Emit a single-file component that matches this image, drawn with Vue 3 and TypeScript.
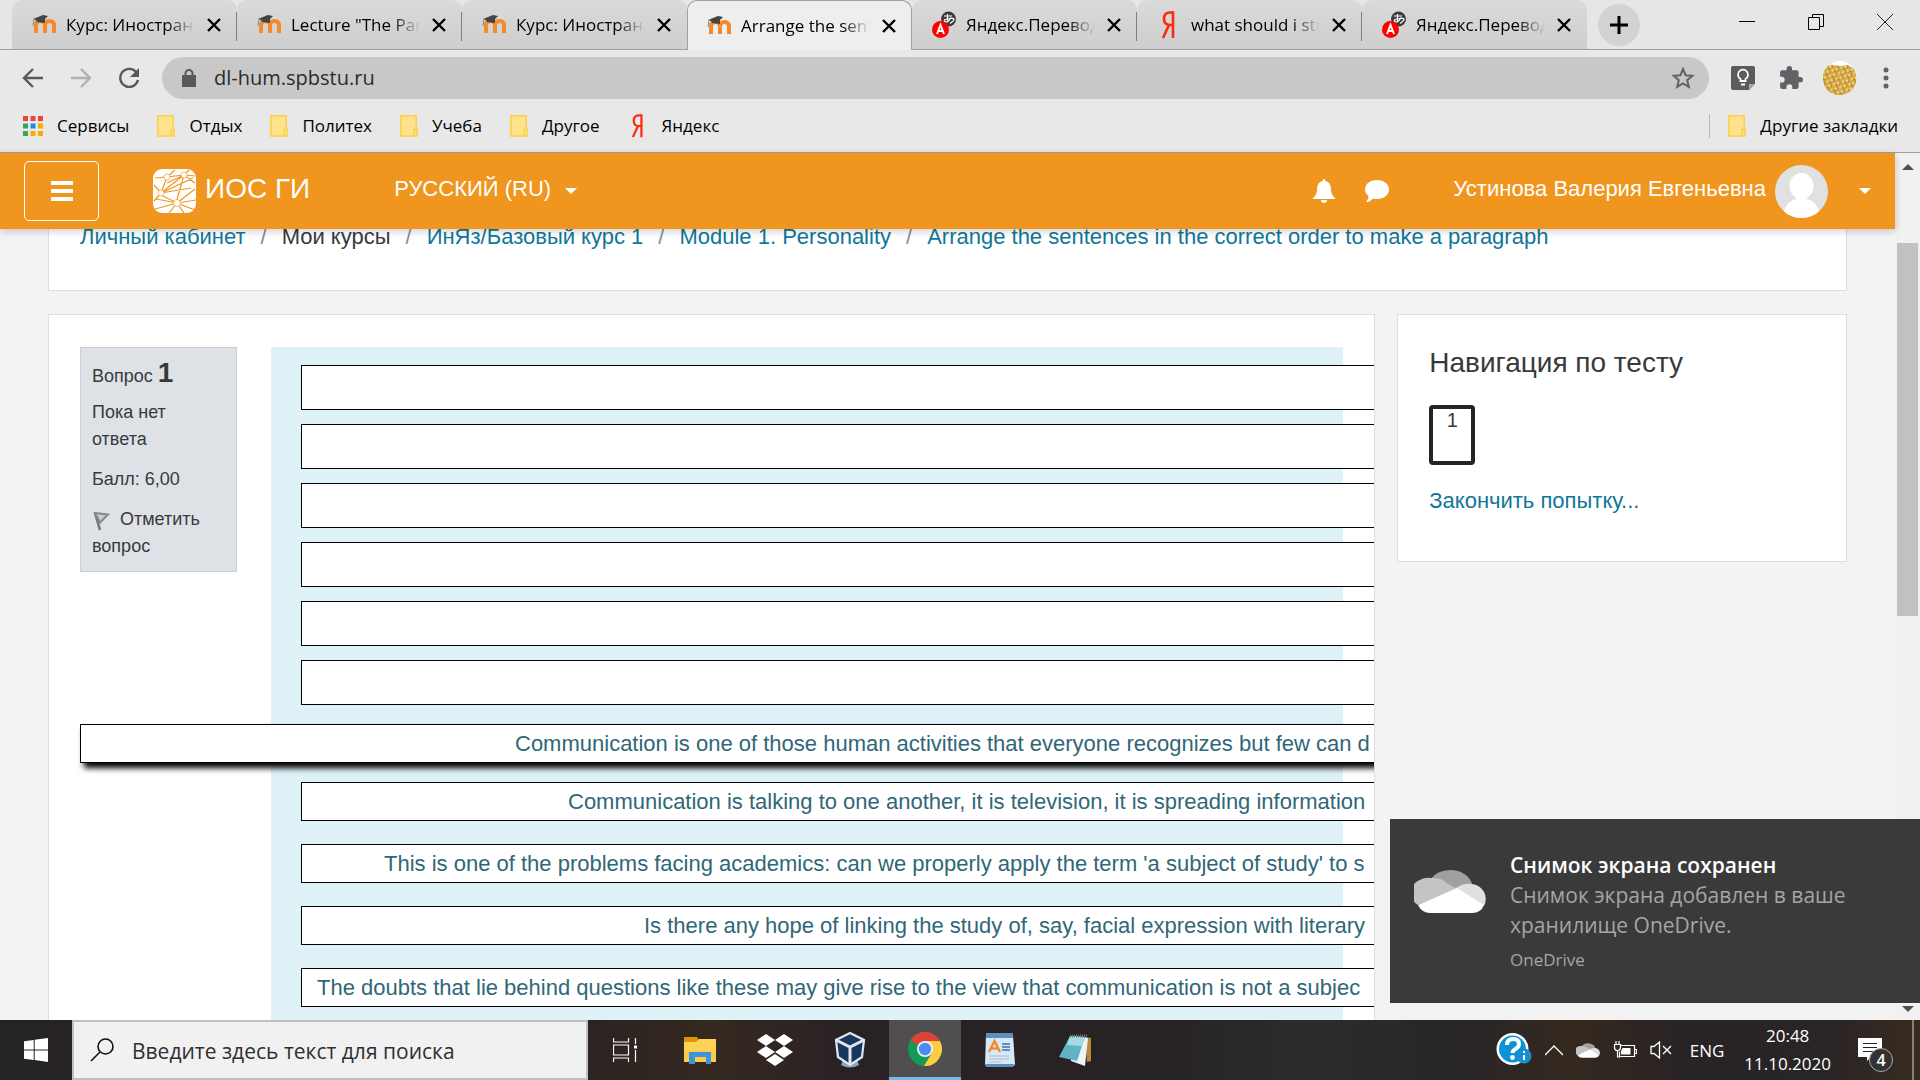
<script setup lang="ts">
interface Tab {
  title: string
  icon: 'moodle' | 'translate' | 'yandex'
  active?: boolean
}

interface Sentence {
  text: string
  inset: number
  dragged?: boolean
}

const tabs: Tab[] = [
  { title: 'Курс: Иностранный', icon: 'moodle' },
  { title: 'Lecture "The Par', icon: 'moodle' },
  { title: 'Курс: Иностранный', icon: 'moodle' },
  { title: 'Arrange the sente', icon: 'moodle', active: true },
  { title: 'Яндекс.Переводчик', icon: 'translate' },
  { title: 'what should i study', icon: 'yandex' },
  { title: 'Яндекс.Переводчик', icon: 'translate' },
]

const folders: string[] = ['Отдых', 'Политех', 'Учеба', 'Другое']

const appDots: string[] = [
  '#f44336', '#f44336', '#f44336',
  '#34a853', '#1e88e5', '#fbab00',
  '#34a853', '#fbab00', '#fbab00',
]

const crumbs: { label: string; link: boolean }[] = [
  { label: 'Личный кабинет', link: true },
  { label: 'Мои курсы', link: false },
  { label: 'ИнЯз/Базовый курс 1', link: true },
  { label: 'Module 1. Personality', link: true },
  { label: 'Arrange the sentences in the correct order to make a paragraph', link: true },
]

const sentences: Sentence[] = [
  { text: 'Communication is one of those human activities that everyone recognizes but few can d', inset: 434, dragged: true },
  { text: 'Communication is talking to one another, it is television, it is spreading information', inset: 266 },
  { text: "This is one of the problems facing academics: can we properly apply the term 'a subject of study' to s", inset: 82 },
  { text: 'Is there any hope of linking the study of, say, facial expression with literary', inset: 342 },
  { text: 'The doubts that lie behind questions like these may give rise to the view that communication is not a subjec', inset: 15 },
]
</script>

<template>
  <div class="desktop">
    <header class="browser">
      <div class="tabstrip">
        <div v-for="(tab, i) in tabs" :key="i" class="tab" :class="{ active: tab.active, divided: i !== 2 && i !== 3 && i !== 4 && i !== 6 || i === 4 }">
          <svg v-if="tab.icon === 'moodle'" class="favicon" viewBox="0 0 24 24">
            <path d="M4 20V12.500Q4 8 8.500 8T13 12.500V20M13 12.500Q13 8 17.500 8T22 12.500V20" fill="none" stroke="#f58a2c" stroke-width="4" />
            <path d="M1 6 11 2l5 1-3 3 0 4-8-1-1-2z" fill="#444" />
            <path d="M2 6 1 13" stroke="#888" fill="none" />
          </svg>
          <svg v-else-if="tab.icon === 'translate'" class="favicon" viewBox="0 0 24 28">
            <circle cx="16.500" cy="8" r="7.500" fill="#3c3c3c" />
            <path d="M12 5h8M15.500 3v7M19 6.500q-3 6-6 4t5-3 0 5" fill="none" stroke="#fff" stroke-width="1.200" />
            <circle cx="8.500" cy="18.500" r="8.500" fill="#f00" />
            <path d="m5 23 3.500-9L12 23M6 20h5" fill="none" stroke="#fff" stroke-width="2" />
          </svg>
          <svg v-else class="favicon" viewBox="0 0 24 28">
            <path d="M16 27V1.500h-3q-6 0-6 6.500 0 6 6 6h3M12 14 6 27" fill="none" stroke="#ff2a0e" stroke-width="2.600" />
          </svg>
          <span class="tab-title">{{ tab.title }}</span>
          <button class="tab-close" aria-label="Закрыть">
            <svg viewBox="0 0 14 14" width="14" height="14"><path d="m1 1 12 12M13 1 1 13" stroke="#000" stroke-width="2.400" /></svg>
          </button>
        </div>
        <button class="new-tab" aria-label="Новая вкладка">
          <svg viewBox="0 0 18 18" width="18" height="18"><path d="M9 0v18M0 9h18" stroke="#000" stroke-width="3" /></svg>
        </button>
        <div class="window-controls">
          <button aria-label="Свернуть"><svg viewBox="0 0 16 16" width="16" height="16"><path d="M0 7.500h16" stroke="#000" /></svg></button>
          <button aria-label="Развернуть"><svg viewBox="0 0 16 16" width="16" height="16"><path d="M.5 3.500h11v12H.5zM4.500 3.500v-3h11v12h-4" fill="none" stroke="#000" /></svg></button>
          <button aria-label="Закрыть окно"><svg viewBox="0 0 16 16" width="16" height="16"><path d="m0 0 16 16M16 0 0 16" stroke="#222" /></svg></button>
        </div>
      </div>

      <div class="toolbar">
        <button class="nav" aria-label="Назад"><svg viewBox="0 0 22 22" width="22" height="22"><path d="M21 11H2M11 2l-9 9 9 9" fill="none" stroke="#555a60" stroke-width="2.400" /></svg></button>
        <button class="nav" aria-label="Вперёд"><svg viewBox="0 0 22 22" width="22" height="22"><path d="M1 11h19M11 2l9 9-9 9" fill="none" stroke="#b0b0b0" stroke-width="2.400" /></svg></button>
        <button class="nav reload" aria-label="Обновить"><svg viewBox="0 0 22 22" width="22" height="22"><path d="M18.500 5.500A9 9 0 1 0 20 13" fill="none" stroke="#555a60" stroke-width="2.400" /><path d="M21 1v9h-9z" fill="#555a60" /></svg></button>
        <div class="address">
          <svg viewBox="0 0 14 18" width="14" height="18"><path d="M0 6h14v12H0z" fill="#55585c" /><path d="M3.500 7V4.500a3.500 3.500 0 0 1 7 0V7" fill="none" stroke="#55585c" stroke-width="2" /></svg>
          <input type="text" value="dl-hum.spbstu.ru" aria-label="Адрес" />
          <svg viewBox="0 0 24 24" width="24" height="24"><path d="m12 3 2.600 6.200 6.700.6-5.100 4.400 1.600 6.600L12 17.300l-5.800 3.500 1.600-6.600-5.100-4.400 6.700-.6z" fill="none" stroke="#5f6368" stroke-width="2" /></svg>
        </div>
        <button class="ext" aria-label="Keep">
          <svg viewBox="0 0 24 24" width="24" height="24"><path d="M2 0h20q2 0 2 2v16l-6 6H2q-2 0-2-2V2q0-2 2-2z" fill="#5c5c5c" /><path d="M24 18h-6v6z" fill="#aaa" /><path d="M9.500 15v-2a5 5 0 1 1 5 0v2zM10 18.500h4" fill="none" stroke="#fff" stroke-width="1.800" /></svg>
        </button>
        <button class="ext" aria-label="Расширения">
          <svg viewBox="1 1 22 22" width="24" height="24"><path d="M20.500 11H19V7a2 2 0 0 0-2-2h-4V3.500a2.500 2.500 0 0 0-5 0V5H4a2 2 0 0 0-2 2v3.800h1.500a2.700 2.700 0 0 1 0 5.400H2V20a2 2 0 0 0 2 2h3.800v-1.500a2.700 2.700 0 0 1 5.400 0V22H17a2 2 0 0 0 2-2v-4h1.500a2.500 2.500 0 0 0 0-5z" fill="#5f6368" /></svg>
        </button>
        <button class="ext profile" aria-label="Профиль">
          <svg viewBox="0 0 34 34" width="34" height="34">
            <defs><pattern id="grain" width="7" height="6" patternUnits="userSpaceOnUse" patternTransform="rotate(24)"><rect width="7" height="6" fill="#d6a845" /><ellipse cx="2" cy="2" rx="1.700" ry="1.100" fill="#f6dfa0" /><ellipse cx="5.500" cy="4.500" rx="1" ry="1.500" fill="#f3d687" /><path d="m3 0 1 3M0 4l3 1" stroke="#b07f22" /></pattern></defs>
            <circle cx="17" cy="17" r="17" fill="#fff" />
            <path d="M3 7q2-4 7-3l7 1 8-1 5 3a17 17 0 1 1-27 0z" fill="url(#grain)" />
          </svg>
        </button>
        <button class="ext dots" aria-label="Меню"><svg viewBox="0 0 6 22" width="6" height="22"><g fill="#5f6368"><circle cx="3" cy="3" r="2.500" /><circle cx="3" cy="11" r="2.500" /><circle cx="3" cy="19" r="2.500" /></g></svg></button>
      </div>

      <nav class="bookmarks">
        <a href="#">
          <svg viewBox="0 0 20 20" width="20" height="20"><rect v-for="(c, i) in appDots" :key="i" :x="(i % 3) * 7.500" :y="Math.floor(i / 3) * 7.500" width="5" height="5" :fill="c" /></svg>
          Сервисы
        </a>
        <a v-for="f in folders" :key="f" href="#">
          <svg viewBox="0 0 18 22" width="18" height="22"><path d="M.8.8h15.400V14H17v7H.8z" fill="#ffe38c" stroke="#fbd04b" stroke-width="1.500" /><path d="M14 21v-6h3" fill="none" stroke="#fbd04b" stroke-width="1.500" /></svg>
          {{ f }}
        </a>
        <a href="#">
          <svg viewBox="2 0 20 28" width="20" height="24"><path d="M16 27V1.500h-3q-6 0-6 6.500 0 6 6 6h3M12 14 6 27" fill="none" stroke="#ff2a0e" stroke-width="2.600" /></svg>
          Яндекс
        </a>
        <a href="#" class="others">
          <svg viewBox="0 0 18 22" width="18" height="22"><path d="M.8.8h15.400V14H17v7H.8z" fill="#ffe38c" stroke="#fbd04b" stroke-width="1.500" /><path d="M14 21v-6h3" fill="none" stroke="#fbd04b" stroke-width="1.500" /></svg>
          Другие закладки
        </a>
      </nav>
    </header>

    <div class="viewport">
      <div class="page">
        <div class="navbar">
          <button class="burger" aria-label="Боковая панель"><svg viewBox="0 0 22 22" width="22" height="22"><path d="M0 3h22M0 11h22M0 19h22" stroke="#fff" stroke-width="4" /></svg></button>
          <a href="#" class="brand">
            <svg viewBox="0 0 43 44" width="43" height="44">
              <rect width="43" height="44" rx="9" fill="#fff" />
              <g fill="none" stroke="#f0951d" stroke-width="1.200">
                <path d="M2 9 14 8 22 1M14 8l17-2M31 6l11 1M36 1l-5 5 11 8M14 8 8 24 31 6 14 14M31 6l-8 28M8 24l32-15M8 24l-7-8M8 24l-7 8M8 24l30-5M24 34 2 40M24 34l-8 10M24 34l7 10M24 34l18 7M24 34l19-3M24 34 42 20M24 34 3 30M24 34 8 26" />
              </g>
              <g fill="#fff" stroke="#f0951d" stroke-width=".6"><circle cx="14" cy="8" r="3" /><circle cx="31" cy="6" r="3" /><circle cx="8" cy="24" r="3" /><circle cx="24" cy="34" r="3.500" /></g>
            </svg>
            <span>ИОС ГИ</span>
          </a>
          <button class="lang"><span>РУССКИЙ (RU)</span><i class="caret"></i></button>
          <div class="user-tools">
            <button aria-label="Уведомления"><svg viewBox="0 0 24 26" width="24" height="26"><path d="M12 1q1.500 0 1.500 2Q19 4.500 19 11q0 6 4 9v1H1v-1q4-3 4-9 0-6.500 5.500-8Q10.500 1 12 1zM9 22h6q0 3-3 3t-3-3z" fill="#fff" /></svg></button>
            <button aria-label="Сообщения"><svg viewBox="0 0 26 24" width="26" height="24"><path d="M13 1c7 0 12 4 12 9.500S20 20 13 20q-2 0-4-.6Q6 23 2 23q3-3 2.500-6Q1 14 1 10.500C1 5 6 1 13 1z" fill="#fff" /></svg></button>
            <button class="user">
              <span>Устинова Валерия Евгеньевна</span>
              <svg viewBox="0 0 53 53" width="53" height="53"><defs><clipPath id="face"><circle cx="26.500" cy="26.500" r="26.500" /></clipPath></defs><g clip-path="url(#face)"><rect width="53" height="53" fill="#e1e1e1" /><ellipse cx="26.500" cy="21" rx="12" ry="13" fill="#fff" /><path d="M21 31h11v3q12 3 13 19H8q1-16 13-19z" fill="#fff" /></g></svg>
              <i class="caret"></i>
            </button>
          </div>
        </div>

        <div class="content">
          <nav class="card crumbs">
            <template v-for="(c, i) in crumbs" :key="i">
              <span v-if="i" class="slash">/</span>
              <a v-if="c.link" href="#">{{ c.label }}</a>
              <span v-else>{{ c.label }}</span>
            </template>
          </nav>

          <div class="columns">
            <main class="card quiz">
              <section class="info">
                <h3>Вопрос <b>1</b></h3>
                <p>Пока нет ответа</p>
                <p>Балл: 6,00</p>
                <p><a href="#"><svg viewBox="0 0 18 20" width="18" height="20"><path d="m3 2 5 17" stroke="#777" stroke-width="2.600" /><path d="m3 2 13 1.500-8 8z" fill="#ccc" stroke="#888" stroke-width="2" /></svg>Отметить вопрос</a></p>
              </section>
              <section class="formulation">
                <div class="drops"><div v-for="n in 6" :key="n" class="drop"></div></div>
                <div class="drags">
                  <button v-for="s in sentences" :key="s.text" class="drag" :class="{ dragged: s.dragged }" :style="{ paddingLeft: s.inset + 'px' }">{{ s.text }}</button>
                </div>
              </section>
            </main>
            <aside class="card side">
              <h2>Навигация по тесту</h2>
              <a href="#" class="qnum">1</a>
              <a href="#">Закончить попытку...</a>
            </aside>
          </div>
        </div>
      </div>
      <div class="scrollbar"><i class="up"></i><div class="thumb"></div><i class="down"></i></div>

      <div class="toast" role="status">
        <svg viewBox="0 0 72 46" width="72" height="46">
          <path d="M17 12a22 17 0 0 1 41 5L43 25z" fill="#a0a0a0" />
          <path d="M17 11Q28 10 34 17l9 5L4 38A18 15 0 0 1 17 11z" fill="#c4c4c4" />
          <path d="M42 21q8-5 15-4a15 15 0 0 1 13 22z" fill="#e0e0e0" />
          <path d="M4 38 43 21l27 17q-3 8-12 8H16Q8 46 4 38z" fill="#fff" />
        </svg>
        <div>
          <strong>Снимок экрана сохранен</strong>
          <p>Снимок экрана добавлен в ваше хранилище OneDrive.</p>
          <small>OneDrive</small>
        </div>
      </div>
    </div>

    <footer class="taskbar">
      <button class="start" aria-label="Пуск"><svg viewBox="0 0 24 24" width="24" height="24"><path d="M0 3.200 9.700 2v9.400H0zM10.700 1.800 24 0v11.400H10.700zM0 12.500h9.700V22L0 20.700zM10.700 12.500H24V24l-13.300-1.900z" fill="#fff" /></svg></button>
      <label class="search">
        <svg viewBox="0 0 24 24" width="24" height="24"><circle cx="15.500" cy="8.500" r="7.500" fill="none" stroke="#111" stroke-width="1.600" /><path d="M10 14 1 23" stroke="#111" stroke-width="1.600" /></svg>
        <input type="text" placeholder="Введите здесь текст для поиска" aria-label="Поиск" />
      </label>
      <div class="apps">
        <button aria-label="Представление задач"><svg viewBox="0 0 24 24" width="24" height="24"><path d="M.5 0v4h15V0M.5 24v-4h15v4M.5 7h15v10H.5zM22.500 0v6M22.500 12v12" fill="none" stroke="#fff" stroke-width="1.200" /><path d="M21 7.500h3v3h-3z" fill="#fff" /></svg></button>
        <button aria-label="Проводник"><svg viewBox="0 0 32 28" width="32" height="28"><path d="M0 1h13l2 3v4H0z" fill="#dc9700" /><path d="M0 6h12l3-3h17v23H0z" fill="#ffd257" /><path d="M0 15h32v11H0z" fill="#f9c23c" opacity=".5" /><path d="M5 28V16h22v12h-5v-7H11v7z" fill="#3a95dd" /></svg></button>
        <button aria-label="Dropbox"><svg viewBox="0 0 36 32" width="36" height="32"><path d="m9 0 9 6-9 6-9-6zM27 0l9 6-9 6-9-6zM9 12l9 6-9 6-9-6zM27 12l9 6-9 6-9-6zM18 20l9 6-9 6-9-6z" fill="#fff" /></svg></button>
        <button aria-label="VirtualBox"><svg viewBox="0 0 32 36" width="32" height="36"><path d="M9 28h14l2 5q-9 5-18 0z" fill="#8ea3c4" /><path d="m16 1 14 7-2 17-12 8-12-8L2 8z" fill="#17375e" stroke="#dfe6f2" stroke-width="2.200" /><path d="m2 8 14 7 14-7M16 15v18" stroke="#dfe6f2" stroke-width="3" fill="none" /></svg></button>
        <button class="current" aria-label="Chrome"><svg viewBox="0 0 34 34" width="34" height="34"><circle cx="17" cy="17" r="17" fill="#149a57" /><path d="M17 17 2.300 8.500A17 17 0 0 1 31.700 8.500z" fill="#db4437" /><path d="M17 9h14.900A17 17 0 0 1 16 34l8-13z" fill="#ffcd40" /><circle cx="17" cy="17" r="8" fill="#f1f1f1" /><circle cx="17" cy="17" r="6.200" fill="#4c8bf5" /></svg></button>
        <button aria-label="WordPad"><svg viewBox="0 0 30 34" width="30" height="34"><path d="M1 2h27l2 30-3 2H2l-2-2z" fill="#d7e9f8" /><path d="M1 0h27v5H1zM0 31h30l-3 3H2z" fill="#5d8fbd" /><path d="M4 19 9.500 8 15 19M6 15.500h7" fill="none" stroke="#f08a2c" stroke-width="2.400" /><path d="M17 11h8M17 14h8M17 17h8" stroke="#3d6fb5" stroke-width="1.500" /><path d="M4 23h20M4 26h20M4 29h12" stroke="#b0b8cc" /></svg></button>
        <button aria-label="Блокнот"><svg viewBox="0 0 32 32" width="32" height="32"><path d="m26 3 6 1v23l-4 1z" fill="#b58a40" /><path d="m12 2 17 2-3 28-14-5z" fill="#eef4f6" /><path d="M11 2 26 3l-8 24L0 23z" fill="#5fb3c2" /><path d="M11 2 26 3l-3 9-15-1z" fill="#a4dbe2" /><path d="M11 2h17" stroke="#777" stroke-width="3" stroke-dasharray="1 1" /></svg></button>
      </div>
      <div class="tray">
        <svg viewBox="0 0 36 34" width="36" height="34"><circle cx="16.500" cy="16" r="16" fill="#fff" /><circle cx="16.500" cy="16" r="13.500" fill="#0b93d5" /><path d="M11 12q0-6 6-6t6 5q0 3-3.500 5-3 1.600-3 4" fill="none" stroke="#fff" stroke-width="4" /><circle cx="16.500" cy="24.500" r="2.400" fill="#fff" /><circle cx="28" cy="23" r="7.500" fill="#1690cf" /><path d="M28 22v5M28 18v2" stroke="#fff" stroke-width="2" /></svg>
        <svg viewBox="0 0 18 12" width="18" height="12"><path d="m0 11 9-9 9 9" fill="none" stroke="#fff" stroke-width="1.400" /></svg>
        <svg viewBox="0 0 72 46" width="24" height="16"><path d="M17 12a22 17 0 0 1 41 5L43 25z" fill="#a0a0a0" /><path d="M17 11Q28 10 34 17l9 5L4 38A18 15 0 0 1 17 11z" fill="#c4c4c4" /><path d="M42 21q8-5 15-4a15 15 0 0 1 13 22z" fill="#e0e0e0" /><path d="M4 38 43 21l27 17q-3 8-12 8H16Q8 46 4 38z" fill="#fff" /></svg>
        <svg viewBox="0 0 24 18" width="24" height="18"><path d="M8 4.500h13.500v11H6.500v-5M22 8.500h1.500v4H22M1.500 3.500h6v3q0 3-3 3t-3-3zM3 0v3M6 0v3M4.500 9v7H7" fill="none" stroke="#fff" stroke-width="1.200" /><path d="M9.500 7h8v6.500H8V10z" fill="#fff" /></svg>
        <svg viewBox="0 0 22 18" width="22" height="18"><path d="M1 5.500h3L9.500 1v16L4 12.500H1zM13 5l8 8M21 5l-8 8" fill="none" stroke="#fff" stroke-width="1.300" /></svg>
        <span class="lng">ENG</span>
        <time class="clock"><span>20:48</span><span>11.10.2020</span></time>
        <button class="center" aria-label="Центр уведомлений"><svg viewBox="0 0 24 24" width="24" height="24"><path d="M0 0h24v19H13l-4 4v-4H0z" fill="#fff" /><path d="M5 5.500h14M5 9.500h14M5 13.500h10" stroke="#222" stroke-width="1.200" /></svg><b>4</b></button>
      </div>
      <button class="show-desktop" aria-label="Свернуть все окна"></button>
    </footer>
  </div>
</template>

<style>
body {
  margin: 0;
}
</style>

<style scoped>
* {
  box-sizing: border-box;
}
.desktop {
  height: 100vh;
  display: flex;
  flex-direction: column;
  overflow: hidden;
  font-family: 'Open Sans', 'Noto Sans', sans-serif;
  color: #000;
}
button {
  border: 0;
  padding: 0;
  background: none;
  font: inherit;
  color: inherit;
}
svg {
  flex: none;
  display: block;
}
a {
  text-decoration: none;
}

.browser {
  flex: none;
  background: #e8e8e8;
  border-bottom: 1px solid #a0a0a0;
}
.tabstrip {
  display: flex;
  height: 50px;
  padding-left: 12px;
  border-bottom: 1px solid #a0a0a0;
  background: #e6e6e6;
}
.tab {
  position: relative;
  flex: 0 1 225px;
  min-width: 0;
  height: 49px;
  display: flex;
  align-items: center;
  padding: 0 16px 0 20px;
  border-radius: 10px 10px 0 0;
  background: linear-gradient(#dadada, #cecece);
}
.tab.divided::after {
  content: '';
  position: absolute;
  right: 0;
  top: 12px;
  width: 1px;
  height: 29px;
  background: #808080;
}
.tab.active {
  height: 50px;
  border: 1px solid #a0a0a0;
  border-bottom: 0;
  background: #eee;
  padding: 0 15px 0 19px;
}
.favicon {
  width: 24px;
  height: 28px;
}
.tab-title {
  flex: 1;
  margin: 0 12px 0 10px;
  overflow: hidden;
  white-space: nowrap;
  font-size: 17px;
  line-height: 24px;
  mask-image: linear-gradient(90deg, #000 78%, transparent);
}
.new-tab {
  align-self: center;
  width: 42px;
  height: 42px;
  margin-left: 11px;
  border-radius: 50%;
  background: #d2d2d2;
  display: grid;
  place-items: center;
}
.window-controls {
  margin-left: auto;
  display: flex;
  gap: 53px;
  padding: 14px 27px 0 0;
  align-items: flex-start;
}
.toolbar {
  display: flex;
  align-items: center;
  height: 54px;
  padding: 2px 31px 0 22px;
}
.nav {
  margin-right: 26px;
}
.reload {
  margin-right: 22px;
}
.address {
  flex: 1;
  display: flex;
  align-items: center;
  height: 42px;
  margin-right: 22px;
  padding: 0 14px 0 20px;
  border-radius: 21px;
  background: #c8c8c8;
}
.address input {
  flex: 1;
  min-width: 0;
  border: 0;
  padding: 0 0 0 18px;
  background: none;
  font: 20px/28px 'Open Sans', 'Noto Sans', sans-serif;
  color: #2b2b2b;
}
.ext {
  margin-right: 24px;
}
.profile {
  margin-left: -4px;
  margin-right: 26px;
}
.dots {
  margin-right: 0;
}
.bookmarks {
  display: flex;
  align-items: center;
  height: 48px;
  gap: 28px;
  padding: 0 22px 4px 23px;
  font-size: 17px;
  line-height: 24px;
}
.bookmarks a {
  display: flex;
  align-items: center;
  gap: 14px;
  color: #000;
}
.bookmarks .others {
  margin-left: auto;
  padding-left: 18px;
  border-left: 1px solid #bbb;
}

.viewport {
  position: relative;
  flex: 1;
  min-height: 0;
  display: flex;
  background: #f3f3f3;
  font-family: 'Liberation Sans', Arial, sans-serif;
}
.page {
  flex: 1;
  min-width: 0;
  display: flex;
  flex-direction: column;
}
.navbar {
  position: relative;
  z-index: 1;
  flex: none;
  display: flex;
  align-items: center;
  height: 76px;
  padding: 0 24px;
  background: #f0951d;
  box-shadow: 0 2px 8px rgba(0, 0, 0, 0.2);
  color: #fff;
}
.navbar span {
  padding-bottom: 4px;
}
.burger {
  width: 75px;
  height: 60px;
  border: 1px solid #fff;
  border-radius: 5px;
  display: grid;
  place-items: center;
}
.brand {
  display: flex;
  align-items: center;
  gap: 9px;
  margin-left: 54px;
  font-size: 28px;
  color: #fff;
}
.lang {
  display: flex;
  align-items: center;
  gap: 14px;
  margin-left: 84px;
  font-size: 22px;
}
.caret {
  border: 6px solid transparent;
  border-top-color: #fff;
  border-bottom: 0;
}
.user-tools {
  margin-left: auto;
  display: flex;
  align-items: center;
  gap: 28px;
}
.user {
  display: flex;
  align-items: center;
  gap: 9px;
  margin-left: 35px;
  font-size: 22px;
}
.user .caret {
  margin-left: 22px;
}
.content {
  flex: 1;
  min-height: 0;
  display: flex;
  flex-direction: column;
  padding: 0 48px;
}
.card {
  background: #fff;
  border: 1px solid #dedede;
}
.crumbs {
  flex: none;
  display: flex;
  gap: 15px;
  height: 72px;
  margin-top: -10px;
  padding: 0 31px;
  border-top: 0;
  font-size: 22px;
  line-height: 36px;
  white-space: nowrap;
  color: #373a3c;
}
.crumbs a,
.side a {
  color: #0f7799;
}
.crumbs .slash {
  color: #868e96;
}
.columns {
  flex: 1;
  min-height: 0;
  display: flex;
  gap: 22px;
  margin-top: 23px;
}
.quiz {
  flex: 1;
  min-width: 0;
  display: flex;
  overflow: hidden;
  border-bottom: 0;
  padding: 32px 31px 0;
}
.info {
  flex: none;
  align-self: flex-start;
  width: 157px;
  height: 225px;
  margin-right: 34px;
  padding: 7px 11px;
  border: 1px solid #cad0d7;
  background: #dee2e6;
  color: #373a3c;
  font-size: 18px;
  line-height: 27px;
}
.info h3 {
  margin: 0 0 5px;
  font-size: 18px;
  font-weight: 400;
  line-height: 36px;
}
.info h3 b {
  font-size: 28px;
}
.info p {
  margin: 0 0 13px;
}
.info a {
  color: inherit;
}
.info a svg {
  display: inline-block;
  margin-right: 10px;
  vertical-align: -6px;
}
.formulation {
  flex: 1;
  min-width: 0;
  padding: 18px 0 0 30px;
  background: #def2f8;
}
.drops,
.drags {
  display: flex;
  flex-direction: column;
  margin-right: -50px;
}
.drops {
  gap: 14px;
}
.drop {
  height: 45px;
  border: 1px solid #000;
  background: #fff;
}
.drags {
  gap: 23px;
  margin-top: 19px;
}
.drag {
  height: 39px;
  border: 1px solid #000;
  background: #fff;
  text-align: left;
  white-space: nowrap;
  font-size: 22px;
  line-height: 36px;
  color: #306777;
}
.drag.dragged {
  margin: 0 0 -4px -221px;
  box-shadow: 4px 5px 6px #000;
}
.side {
  flex: none;
  align-self: flex-start;
  width: 25%;
  height: 248px;
  padding: 29px 31px;
  font-size: 22px;
  line-height: 34px;
}
.side h2 {
  margin: 0 0 23px;
  font-size: 28px;
  font-weight: 400;
  line-height: 38px;
  color: #373a3c;
}
.side .qnum {
  display: block;
  width: 46px;
  height: 60px;
  margin-bottom: 19px;
  border: 4px solid #212529;
  border-radius: 4px;
  text-align: center;
  font-size: 20px;
  line-height: 22px;
  color: #373a3c;
}
.scrollbar {
  flex: none;
  width: 25px;
  display: flex;
  flex-direction: column;
  align-items: center;
  padding: 11px 0 8px;
  background: #f1f1f1;
}
.scrollbar i {
  border: 6px solid transparent;
}
.scrollbar .up {
  border-top: 0;
  border-bottom-color: #505050;
}
.scrollbar .down {
  margin-top: auto;
  border-bottom: 0;
  border-top-color: #505050;
}
.thumb {
  width: 21px;
  height: 44%;
  margin-top: 73px;
  background: #c1c1c1;
}

.toast {
  position: absolute;
  right: 0;
  bottom: 17px;
  z-index: 2;
  display: flex;
  align-items: flex-start;
  gap: 24px;
  width: 530px;
  height: 184px;
  padding: 31px 60px 0 24px;
  background: #3a3a3a;
  font: 21px/30px 'Open Sans', 'Noto Sans', sans-serif;
  color: #a5a5a5;
}
.toast svg {
  margin-top: 17px;
}
.toast strong {
  display: block;
  font-weight: 600;
  color: #fff;
}
.toast p {
  margin: 0;
}
.toast small {
  display: block;
  margin-top: 8px;
  font-size: 17px;
  line-height: 24px;
}

.taskbar {
  flex: none;
  display: flex;
  height: 60px;
  background: linear-gradient(90deg, #262324, #2a2322 30%, #35281f 37%, #292225 44%, #272224 60%, #2c2c2c 68%, #282527 76%, #35291f 82%, #282325 88%, #292426 95%, #382c1f);
  color: #fff;
}
.start {
  width: 72px;
  display: grid;
  place-items: center;
}
.search {
  display: flex;
  align-items: center;
  width: 516px;
  padding: 0 16px;
  border: 2px solid #c0c0c0;
  background: #f1f1f1;
}
.search input {
  flex: 1;
  min-width: 0;
  border: 0;
  padding: 2px 0 0 18px;
  background: none;
  font: 21px/30px 'Open Sans', 'Noto Sans', sans-serif;
}
.search input::placeholder {
  color: #2f2f2f;
  opacity: 1;
}
.apps {
  display: flex;
  gap: 3px;
  margin-left: 1px;
}
.apps button {
  width: 72px;
  display: grid;
  place-items: center;
}
.apps .current {
  background: #514e50;
  border-bottom: 3px solid #76b9ed;
}
.tray {
  display: flex;
  align-items: center;
  gap: 13px;
  margin-left: auto;
  padding-right: 19px;
  font-size: 17px;
}
.lng {
  margin-left: 5px;
}
.clock {
  display: flex;
  flex-direction: column;
  align-items: center;
  margin-left: 7px;
  line-height: 28px;
}
.center {
  position: relative;
  margin-left: 14px;
  width: 35px;
}
.center b {
  position: absolute;
  left: 11px;
  top: 10px;
  width: 24px;
  height: 24px;
  border: 1px solid #aaa;
  border-radius: 50%;
  background: #333;
  font-size: 16px;
  font-weight: 600;
  line-height: 22px;
}
.show-desktop {
  width: 8px;
  border-left: 2px solid #85807a;
}
</style>
